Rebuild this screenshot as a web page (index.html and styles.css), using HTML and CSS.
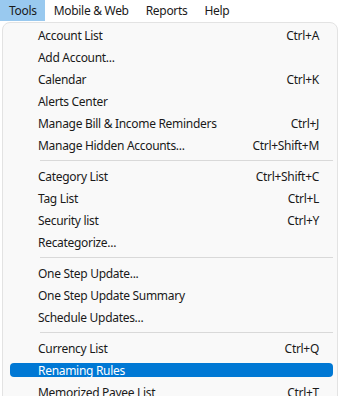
FILE: index.html
```html
<!DOCTYPE html>
<html lang="en">

<head>
    <meta charset="UTF-8">
    <title>Tools menu</title>
    <link rel="stylesheet" href="styles.css">
</head>

<body>
    <nav class="menubar">
        <span class="top valgt">Tools</span>
        <span class="top">Mobile &amp; Web</span>
        <span class="top">Reports</span>
        <span class="top">Help</span>
    </nav>

    <ul class="menu">
        <li class="item"><span>Account List</span><span>Ctrl+A</span></li>
        <li class="item"><span>Add Account...</span></li>
        <li class="item"><span>Calendar</span><span>Ctrl+K</span></li>
        <li class="item"><span>Alerts Center</span></li>
        <li class="item"><span>Manage Bill &amp; Income Reminders</span><span>Ctrl+J</span></li>
        <li class="item"><span>Manage Hidden Accounts...</span><span>Ctrl+Shift+M</span></li>
        <li class="sep"></li>
        <li class="item"><span>Category List</span><span>Ctrl+Shift+C</span></li>
        <li class="item"><span>Tag List</span><span>Ctrl+L</span></li>
        <li class="item"><span>Security list</span><span>Ctrl+Y</span></li>
        <li class="item"><span>Recategorize...</span></li>
        <li class="sep"></li>
        <li class="item"><span>One Step Update...</span></li>
        <li class="item"><span>One Step Update Summary</span></li>
        <li class="item"><span>Schedule Updates...</span></li>
        <li class="sep"></li>
        <li class="item"><span>Currency List</span><span>Ctrl+Q</span></li>
        <li class="item aktiv"><span>Renaming Rules</span></li>
        <li class="item"><span>Memorized Payee List</span><span>Ctrl+T</span></li>
    </ul>
</body>

</html>
```

FILE: styles.css
```css
* {
    margin: 0;
    padding: 0;
    list-style-type: none;
    box-sizing: border-box;
}

body {
    background: #ffffff;
    font-family: "Noto Sans", "Open Sans", sans-serif;
    font-size: 12px;
    letter-spacing: -0.3px;
    color: #1a1a1a;
    overflow: hidden;
}

/* menu bar */
.menubar {
    display: flex;
    height: 21px;
    margin-bottom: 1px;
}

.top {
    padding: 0 8px 0 9px;
    line-height: 21px;
}

.valgt {
    background-color: #99c9ef;
}

/* dropdown */
.menu {
    display: flex;
    flex-direction: column;
    width: 336px;
    margin-left: 2px;
    padding-top: 1px;
    border: 1px solid #e3e3e3;
    border-radius: 8px 8px 0 0;
    background: #f9f9f9;
}

.item {
    display: flex;
    justify-content: space-between;
    height: 14px;
    margin: 4px 4px 4px 7px;
    padding: 0 14px 0 28px;
    line-height: 15px;
    border-radius: 4px;
}

.aktiv {
    background: #0078d4;
    color: #ffffff;
}

.sep {
    height: 1px;
    margin: 4px 4px 4px 37px;
    background: #d9d9d9;
}
```
